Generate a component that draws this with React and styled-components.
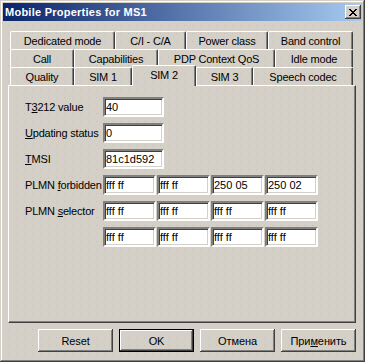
import React from "react";
import styled, { createGlobalStyle, css } from "styled-components";

const Global = createGlobalStyle`
  html, body { margin: 0; padding: 0; background: #d4d0c8; }
  body { font-family: "Liberation Sans", Arial, sans-serif; font-size: 11px; }
`;

const dots = css`
  background-color: #d4d0c8;
  background-image: linear-gradient(to bottom, transparent 1px, #d4d0c8 1px),
    linear-gradient(to right, #a9c6e6 1px, #d4d0c8 1px);
  background-size: 8px 8px;
  background-position: 0 1px;
  background-attachment: fixed;
`;

const Window = styled.div`
  width: 365px;
  height: 362px;
  box-sizing: border-box;
  padding: 3px;
  display: flex;
  flex-direction: column;
  ${dots};
  box-shadow: inset -1px -1px #404040, inset 1px 1px #d4d0c8,
    inset -2px -2px #808080, inset 2px 2px #ffffff;
`;

const TitleBar = styled.div`
  height: 18px;
  flex: none;
  display: flex;
  align-items: center;
  justify-content: space-between;
  padding: 0 1px 0 2px;
  background: linear-gradient(to right, #0a246a, #a6caf0);
`;

const Title = styled.span`
  color: #ffffff;
  font-weight: bold;
  font-size: 11px;
  letter-spacing: 0.25px;
  font-family: "Liberation Sans", Arial, sans-serif;
`;

const CloseButton = styled.div`
  width: 16px;
  height: 14px;
  box-sizing: border-box;
  background: #d4d0c8;
  display: flex;
  align-items: center;
  justify-content: center;
  box-shadow: inset -1px -1px #404040, inset 1px 1px #ffffff,
    inset -2px -2px #808080;
  svg { display: block; margin: 0 0 0 -1px; }
`;

const Body = styled.div`
  flex: 1;
  display: flex;
  flex-direction: column;
  padding: 10px 6px 0 5px;
`;

const TabStrip = styled.div`
  display: flex;
  flex-direction: column;
  padding-left: 2px;
`;

const TabRow = styled.div`
  display: flex;
  height: 18px;
  align-items: flex-end;
  position: relative;
  z-index: ${(p) => p.$z};
`;

const Tab = styled.div`
  width: ${(p) => p.$w}px;
  flex: none;
  height: ${(p) => (p.$selected ? 21 : 18)}px;
  margin-bottom: ${(p) => (p.$selected ? -1 : 0)}px;
  padding-bottom: ${(p) => (p.$selected ? 3 : 0)}px;
  position: relative;
  z-index: ${(p) => (p.$selected ? 3 : 1)};
  box-sizing: border-box;
  border-left: 1px solid #ffffff;
  border-top: 1px solid #ffffff;
  border-right: 1px solid #404040;
  border-radius: 2px 2px 0 0;
  box-shadow: inset -1px 0 #808080;
  display: flex;
  align-items: center;
  justify-content: center;
  color: #000;
  letter-spacing: -0.2px;
  white-space: nowrap;
  ${dots};
`;

const Panel = styled.div`
  width: 348px;
  height: 238px;
  box-sizing: border-box;
  position: relative;
  z-index: 2;
  border-top: 1px solid #ffffff;
  border-left: 1px solid #ffffff;
  border-right: 1px solid #404040;
  border-bottom: 1px solid #404040;
  box-shadow: inset -1px -1px #808080;
  padding: 11px 0 0 16px;
  display: flex;
  flex-direction: column;
  gap: 6px;
`;

const FieldRow = styled.div`
  display: flex;
  align-items: center;
  height: 20px;
`;

const Label = styled.div`
  width: 78px;
  flex: none;
  color: #000;
  letter-spacing: -0.2px;
  white-space: nowrap;
  u { text-decoration: underline; text-underline-offset: 1px; }
`;

const Inputs = styled.div`
  display: flex;
  gap: 1px;
`;

const Field = styled.input`
  width: ${(p) => p.$w}px;
  height: 20px;
  box-sizing: border-box;
  margin: 0;
  padding: 0 0 0 1px;
  border: 2px solid;
  border-color: #808080 #ffffff #ffffff #808080;
  box-shadow: inset 1px 1px #404040, inset -1px -1px #d4d0c8;
  background: #ffffff;
  font-family: "Liberation Sans", Arial, sans-serif;
  font-size: 11px;
  color: #000;
  outline: none;
`;

const ButtonRow = styled.div`
  display: flex;
  justify-content: flex-end;
  gap: 6px;
  margin-top: 6px;
  width: 348px;
`;

const Button = styled.div`
  width: 75px;
  height: 23px;
  box-sizing: border-box;
  display: flex;
  align-items: center;
  justify-content: center;
  color: #000;
  letter-spacing: -0.1px;
  ${dots};
  ${(p) =>
    p.$default
      ? css`
          border: 1px solid #000;
          box-shadow: inset -1px -1px #404040, inset 1px 1px #ffffff,
            inset -2px -2px #808080;
        `
      : css`
          box-shadow: inset -1px -1px #404040, inset 1px 1px #ffffff,
            inset -2px -2px #808080;
        `}
  u { text-decoration: underline; text-underline-offset: 1px; }
`;

const tabRows = [
  [
    ["Dedicated mode", 105],
    ["C/I - C/A", 71],
    ["Power class", 82],
    ["Band control", 85],
  ],
  [
    ["Call", 64],
    ["Capabilities", 84],
    ["PDP Context QoS", 117],
    ["Idle mode", 78],
  ],
  [
    ["Quality", 64],
    ["SIM 1", 58],
    ["SIM 2", 64, true],
    ["SIM 3", 57],
    ["Speech codec", 100],
  ],
];

const CloseGlyph = () => (
  <svg width="8" height="7" viewBox="0 0 8 7" shapeRendering="crispEdges">
    <path
      fill="#000"
      d="M0 0h2v1H0zM6 0h2v1H6zM1 1h2v1H1zM5 1h2v1H5zM2 2h4v1H2zM3 3h2v1H3zM2 4h4v1H2zM1 5h2v1H1zM5 5h2v1H5zM0 6h2v1H0zM6 6h2v1H6z"
    />
  </svg>
);

export default function App() {
  return (
    <>
      <Global />
      <Window>
        <TitleBar>
          <Title>Mobile Properties for MS1</Title>
          <CloseButton>
            <CloseGlyph />
          </CloseButton>
        </TitleBar>
        <Body>
          <TabStrip>
            {tabRows.map((row, i) => (
              <TabRow key={i} $z={i + 1}>
                {row.map(([name, w, sel]) => (
                  <Tab key={name} $w={w} $selected={sel}>
                    {name}
                  </Tab>
                ))}
              </TabRow>
            ))}
          </TabStrip>
          <Panel>
            <FieldRow>
              <Label>
                T<u>3</u>212 value
              </Label>
              <Field $w={61} readOnly value="40" />
            </FieldRow>
            <FieldRow>
              <Label>
                <u>U</u>pdating status
              </Label>
              <Field $w={61} readOnly value="0" />
            </FieldRow>
            <FieldRow>
              <Label>
                <u>T</u>MSI
              </Label>
              <Field $w={61} readOnly value="81c1d592" />
            </FieldRow>
            <FieldRow>
              <Label>
                PLMN <u>f</u>orbidden
              </Label>
              <Inputs>
                <Field $w={53} readOnly value="fff ff" />
                <Field $w={53} readOnly value="fff ff" />
                <Field $w={53} readOnly value="250 05" />
                <Field $w={53} readOnly value="250 02" />
              </Inputs>
            </FieldRow>
            <FieldRow>
              <Label>
                PLMN <u>s</u>elector
              </Label>
              <Inputs>
                <Field $w={53} readOnly value="fff ff" />
                <Field $w={53} readOnly value="fff ff" />
                <Field $w={53} readOnly value="fff ff" />
                <Field $w={53} readOnly value="fff ff" />
              </Inputs>
            </FieldRow>
            <FieldRow>
              <Label />
              <Inputs>
                <Field $w={53} readOnly value="fff ff" />
                <Field $w={53} readOnly value="fff ff" />
                <Field $w={53} readOnly value="fff ff" />
                <Field $w={53} readOnly value="fff ff" />
              </Inputs>
            </FieldRow>
          </Panel>
          <ButtonRow>
            <Button>Reset</Button>
            <Button $default>OK</Button>
            <Button>Отмена</Button>
            <Button>
              При<u>м</u>енить
            </Button>
          </ButtonRow>
        </Body>
      </Window>
    </>
  );
}
